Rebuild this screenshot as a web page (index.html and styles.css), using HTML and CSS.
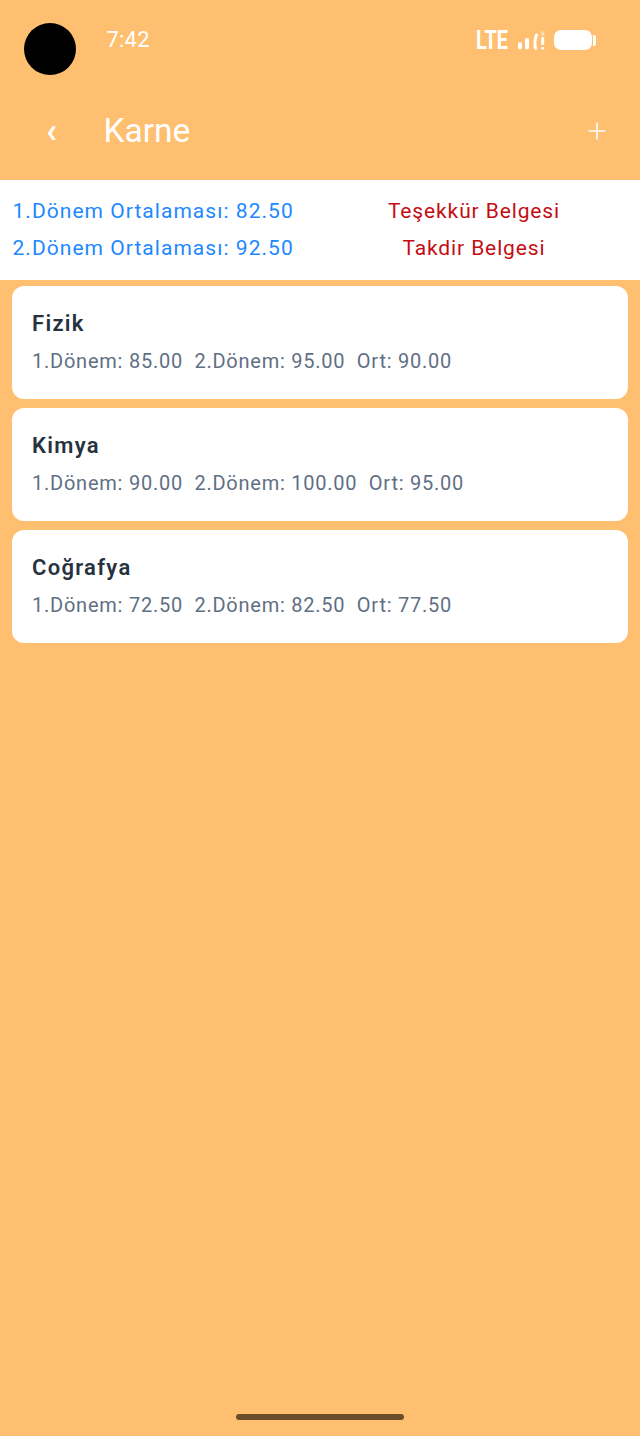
FILE: index.html
```html
<!DOCTYPE html>
<html lang="tr">
  <head>
    <meta charset="UTF-8" />
    <meta name="viewport" content="width=device-width, initial-scale=1.0" />
    <link rel="stylesheet" href="styles.css">
    <title>Karne</title>
  </head>
  <body>
    <div class="camera"></div>

    <div class="status-bar">
      <span class="clock">7:42</span>
      <div class="status-icons">
        <span class="lte">LTE</span>
        <svg class="signal" width="27" height="20" viewBox="0 0 27 20">
          <rect x="0" y="12" width="4" height="7.5" rx="2" fill="#fff" />
          <rect x="7" y="8" width="4" height="11.5" rx="2" fill="#fff" />
          <path d="M18.5 5 Q16 11 17.5 18.5" fill="none" stroke="#fff" stroke-width="3" stroke-linecap="round" />
          <rect x="23" y="1" width="3.4" height="5" rx="1.7" fill="#ffd9ac" />
          <rect x="23.2" y="7" width="3" height="8" rx="1" fill="#fff" />
          <rect x="23.2" y="17" width="3" height="2.6" rx="1" fill="#fff" />
        </svg>
        <div class="battery">
          <div class="battery-body"></div>
          <div class="battery-tip"></div>
        </div>
      </div>
    </div>

    <div class="header">
      <span class="back">‹</span>
      <h1>Karne</h1>
      <svg class="add" width="18" height="18" viewBox="0 0 18 18">
        <path d="M9 0.5V17.5M0.5 9H17.5" stroke="#fff" stroke-width="1.6" />
      </svg>
    </div>

    <div class="summary">
      <div class="summary-row">
        <span class="average">1.Dönem Ortalaması: 82.50</span>
        <span class="award">Teşekkür Belgesi</span>
      </div>
      <div class="summary-row">
        <span class="average">2.Dönem Ortalaması: 92.50</span>
        <span class="award">Takdir Belgesi</span>
      </div>
    </div>

    <div class="list">
      <div class="card">
        <h2>Fizik</h2>
        <p><span>1.Dönem: 85.00</span><span>2.Dönem: 95.00</span><span>Ort: 90.00</span></p>
      </div>
      <div class="card">
        <h2>Kimya</h2>
        <p><span>1.Dönem: 90.00</span><span>2.Dönem: 100.00</span><span>Ort: 95.00</span></p>
      </div>
      <div class="card">
        <h2>Coğrafya</h2>
        <p><span>1.Dönem: 72.50</span><span>2.Dönem: 82.50</span><span>Ort: 77.50</span></p>
      </div>
    </div>

    <div class="home-bar"></div>
  </body>
</html>
```

FILE: styles.css
```css
html,
body {
  height: 100%;
}
body {
  margin: 0;
  display: flex;
  flex-direction: column;
  background: #ffbf70;
  font-family: Roboto, sans-serif;
  overflow: hidden;
}

.camera {
  position: absolute;
  left: 24px;
  top: 23px;
  width: 52px;
  height: 52px;
  border-radius: 50%;
  background: #000;
}

.status-bar {
  height: 92px;
  box-sizing: border-box;
  padding: 27px 44px 0 106.5px;
  display: flex;
  justify-content: space-between;
  align-items: flex-start;
  color: #fff;
}
.clock {
  font-size: 22px;
  line-height: 26px;
  letter-spacing: 0.2px;
}
.status-icons {
  display: flex;
  align-items: center;
  gap: 9px;
  height: 26px;
}
.lte {
  font-weight: 700;
  font-size: 26px;
  margin-right: 1px;
  transform: scaleX(0.76);
  transform-origin: right center;
}
.battery {
  display: flex;
  align-items: center;
  gap: 1px;
}
.battery-body {
  width: 38px;
  height: 20px;
  border-radius: 7px;
  background: #fff;
}
.battery-tip {
  width: 3px;
  height: 11px;
  border-radius: 0 2px 2px 0;
  background: #fff;
}

.header {
  height: 88px;
  display: flex;
  align-items: center;
  padding: 0 34px 10px 46px;
  box-sizing: border-box;
  color: #fff;
}
.back {
  width: 57.5px;
  font-size: 35px;
  font-weight: 700;
  line-height: 40px;
}
.header h1 {
  flex: 1;
  margin: 0 0 2px;
  font-size: 33.5px;
  font-weight: 400;
}

.summary {
  height: 100px;
  box-sizing: border-box;
  padding: 12px 0 0 12.5px;
  background: #fff;
}
.summary-row {
  display: flex;
  height: 37px;
  align-items: center;
  font-size: 21px;
}
.average {
  width: 319.5px;
  letter-spacing: 1.04px;
  color: #1e88ff;
}
.award {
  width: 284px;
  text-align: center;
  letter-spacing: 0.88px;
  color: #c40d12;
}

.list {
  display: flex;
  flex-direction: column;
  gap: 9px;
  padding: 6px 12px 0;
}
.card {
  height: 113px;
  box-sizing: border-box;
  padding: 23px 20px 0;
  background: #fff;
  border-radius: 12px;
}
.card h2 {
  margin: 0;
  font-size: 22px;
  line-height: 30px;
  font-weight: 600;
  letter-spacing: 1.3px;
  color: #27323f;
}
.card p {
  display: flex;
  gap: 11.5px;
  margin: 7px 0 0;
  font-size: 20px;
  line-height: 30px;
  letter-spacing: 0.76px;
  color: #5f6f84;
}

.home-bar {
  position: absolute;
  left: 236px;
  top: 1414px;
  width: 168px;
  height: 6px;
  border-radius: 3px;
  background: #6b4d2a;
}
```
